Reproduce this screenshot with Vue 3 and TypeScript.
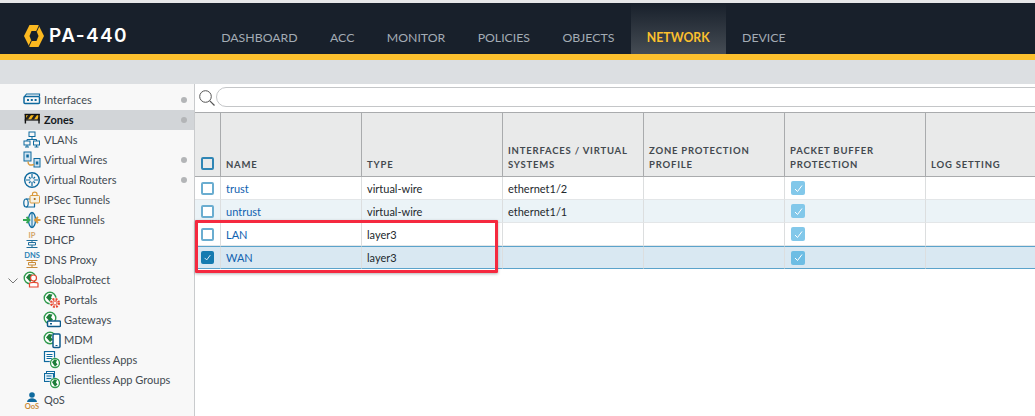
<script setup lang="ts">
const tabs = ['DASHBOARD', 'ACC', 'MONITOR', 'POLICIES', 'OBJECTS', 'NETWORK', 'DEVICE'];

interface NavItem {
  label: string;
  icon: string;
  dot?: boolean;
  child?: boolean;
  active?: boolean;
  caret?: boolean;
}

const nav: NavItem[] = [
  { label: 'Interfaces', icon: 'iface', dot: true },
  { label: 'Zones', icon: 'zones', dot: true, active: true },
  { label: 'VLANs', icon: 'vlans' },
  { label: 'Virtual Wires', icon: 'wires', dot: true },
  { label: 'Virtual Routers', icon: 'routers', dot: true },
  { label: 'IPSec Tunnels', icon: 'ipsec' },
  { label: 'GRE Tunnels', icon: 'gre' },
  { label: 'DHCP', icon: 'dhcp' },
  { label: 'DNS Proxy', icon: 'dns' },
  { label: 'GlobalProtect', icon: 'gp', caret: true },
  { label: 'Portals', icon: 'portals', child: true },
  { label: 'Gateways', icon: 'gateways', child: true },
  { label: 'MDM', icon: 'mdm', child: true },
  { label: 'Clientless Apps', icon: 'apps', child: true },
  { label: 'Clientless App Groups', icon: 'groups', child: true },
  { label: 'QoS', icon: 'qos' },
];

const zones = [
  { name: 'trust', type: 'virtual-wire', iface: 'ethernet1/2', checked: false },
  { name: 'untrust', type: 'virtual-wire', iface: 'ethernet1/1', checked: false },
  { name: 'LAN', type: 'layer3', iface: '', checked: false },
  { name: 'WAN', type: 'layer3', iface: '', checked: true },
];
</script>

<template>
  <div class="page">
    <header class="top">
      <div class="brand">
        <svg class="logo" width="20" height="22" viewBox="0 0 20 22">
          <path d="M5.500 0H14.500L20 11L14.500 22H5.500L0 11Z" fill="#fcb920" />
          <path d="M7.500 6H12.500L14.500 11L12.500 16H7.500L5.500 11Z" fill="#18202b" />
          <path d="M12 6.500 15 0H16L13 6.500ZM8 15.500 5 22H4L7 15.500Z" fill="#18202b" />
        </svg>
        <span class="model">PA-440</span>
      </div>
      <nav class="tabs">
        <a v-for="t in tabs" :key="t" class="tab" :class="{ on: t === 'NETWORK' }">{{ t }}</a>
      </nav>
    </header>
    <div class="subbar"></div>

    <div class="body">
      <aside class="side">
        <div v-for="n in nav" :key="n.label" class="item" :class="{ active: n.active, child: n.child }">
          <svg v-if="n.caret" class="caret" width="10" height="6" viewBox="0 0 10 6">
            <path d="M.5.5 5 5 9.500.5" fill="none" stroke="#777" stroke-width="1" />
          </svg>
          <svg class="ico" width="18" height="18" viewBox="0 0 18 18" fill="none">
            <template v-if="n.icon === 'iface'">
              <path d="M1.500 5.500 3.500 3H16.500V5" stroke="#0f6a9e" stroke-width="1.200" />
              <rect x="1" y="5.500" width="15.500" height="7" rx="1" stroke="#0f6a9e" stroke-width="1.500" />
              <path d="M4 9H6M7.800 9H9.800M11.600 9H13.600" stroke="#0f6a9e" stroke-width="2" />
            </template>
            <template v-else-if="n.icon === 'zones'">
              <rect x="2" y="4" width="14.500" height="4.500" fill="#f2b51c" />
              <path d="M2 8.500 5 4H8L5 8.500ZM8 8.500 11 4H14L11 8.500ZM14 8.500 16.500 5V8.500Z" fill="#222" />
              <path d="M1.700 3.500H16.800" stroke="#111" stroke-width="1.400" />
              <path d="M1.700 9H16.800" stroke="#111" stroke-width="1.200" />
              <path d="M2.400 3V12.500M16 3V12.500" stroke="#111" stroke-width="1.400" />
            </template>
            <template v-else-if="n.icon === 'vlans'">
              <rect x="6" y="1" width="6" height="4.500" stroke="#0f6a9e" />
              <rect x="1" y="10" width="6" height="4" stroke="#0f6a9e" />
              <rect x="10.500" y="10" width="6" height="4" stroke="#0f6a9e" />
              <path d="M9 6V8.500M4 10V8.500H13.500V10M4 14V16M13.500 14V16M2 16H6M11.500 16H15.500" stroke="#0f6a9e" />
            </template>
            <template v-else-if="n.icon === 'wires'">
              <rect x="1" y="1" width="7" height="9" fill="#cfe3f1" stroke="#0f6a9e" />
              <rect x="11" y="7.500" width="6" height="8.500" fill="#cfe3f1" stroke="#0f6a9e" />
              <rect x="3.300" y="3.500" width="2.500" height="3" fill="#0f6a9e" />
              <rect x="12.800" y="10.500" width="2.500" height="3" fill="#0f6a9e" />
              <path d="M5 10.500C5 14.500 7 14.500 11 13.500" stroke="#d99a3c" stroke-width="1.400" />
            </template>
            <template v-else-if="n.icon === 'routers'">
              <circle cx="9" cy="9" r="7.300" stroke="#0f6a9e" stroke-width="1.400" />
              <path d="M9 3V15M3 9H15M6 6 12 12M12 6 6 12" stroke="#0f6a9e" stroke-width="1.200" />
              <circle cx="9" cy="9" r="2" fill="#f8f8f8" />
            </template>
            <template v-else-if="n.icon === 'ipsec'">
              <path d="M3 8H9M3 16H12" stroke="#0f6a9e" stroke-width="1.200" />
              <ellipse cx="3" cy="12" rx="2.200" ry="4" stroke="#0f6a9e" stroke-width="1.200" />
              <path d="M11.500 12V16" stroke="#0f6a9e" stroke-width="1.200" />
              <rect x="7" y="4.500" width="9.500" height="7.500" rx="1" fill="#f7f2e4" stroke="#d99a3c" />
              <path d="M9.500 4.500V3C9.500 .4 14 .4 14 3V4.500" stroke="#d99a3c" stroke-width="1.200" />
              <circle cx="11.700" cy="8" r="1.100" fill="#a96d18" />
            </template>
            <template v-else-if="n.icon === 'gre'">
              <ellipse cx="9" cy="9" rx="3.500" ry="7.500" fill="#dcecf6" stroke="#0f6a9e" stroke-width="1.300" />
              <path d="M9 2V16" stroke="#0f6a9e" />
              <path d="M0 9H6M3.500 6 6.500 9 3.500 12" stroke="#35a853" stroke-width="1.800" />
              <path d="M17.500 9H12.500M15 6 12 9 15 12" stroke="#d99a3c" stroke-width="1.800" />
            </template>
            <template v-else-if="n.icon === 'dhcp' || n.icon === 'dns'">
              <path
                d="M3.500 9.500H14.500M9 9.500V11.500M5.500 11.500H12.500V14H5.500ZM9 14V16.500M3.500 16.500H14.500"
                :stroke="n.icon === 'dns' ? '#c98b38' : '#1e6e9e'"
                stroke-width="1"
              />
              <text x="9" y="7" text-anchor="middle" class="mini" :fill="n.icon === 'dns' ? '#2a7fb5' : '#d3a566'">
                {{ n.icon === 'dns' ? 'DNS' : 'IP' }}
              </text>
            </template>
            <template v-else-if="n.icon === 'qos'">
              <circle cx="9" cy="4" r="2.800" fill="#0f6a9e" />
              <path d="M4 11C4.500 6 13.500 6 14 11Z" fill="#0f6a9e" />
              <text x="9" y="17.500" text-anchor="middle" class="mini" fill="#c98b38">QoS</text>
            </template>
            <template v-else-if="n.icon === 'apps' || n.icon === 'groups'">
              <template v-if="n.icon === 'apps'">
                <rect x="1.500" y="0.500" width="10" height="10" fill="#fff" stroke="#0f6a9e" stroke-width="1.200" />
                <path d="M3.500 3.500H9.500M3.500 5.500H9.500M3.500 7.500H9.500" stroke="#0f6a9e" />
              </template>
              <template v-else>
                <rect x="3.500" y="0.500" width="8" height="7" fill="#fff" stroke="#0f6a9e" />
                <rect x="1.500" y="2.500" width="9" height="8" fill="#dcecf6" stroke="#0f6a9e" />
                <path d="M3.500 5H8.500M3.500 7.500H8.500" stroke="#0f6a9e" />
              </template>
              <circle cx="12" cy="12" r="5.500" fill="#fff" />
              <circle cx="12" cy="12" r="4.500" fill="#fff" stroke="#2f9a4c" stroke-width="1.300" />
              <path d="M9 11 11.500 8.500 14 9 13 11.500 14.500 13.500 12 15.500 10.500 13.500Z" fill="#1e7d39" />
            </template>
            <template v-else>
              <circle cx="7" cy="7" r="5.800" fill="#fff" stroke="#2f9a4c" stroke-width="1.400" />
              <path d="M3 6.500 6 3 9.500 3.500 8 6.500 10 8.500 7 11 5 8.500Z" fill="#1e7d39" />
              <template v-if="n.icon === 'gp'">
                <circle cx="10.500" cy="7" r="3" fill="#fff" stroke="#e8452e" stroke-width="1.200" />
                <path d="M6.500 16V12.500C6.500 11 15 11 15 12.500V16Z" fill="#fff" stroke="#e8452e" stroke-width="1.200" />
              </template>
              <template v-else-if="n.icon === 'portals'">
                <circle cx="12" cy="12" r="5.500" fill="#f8f8f8" />
                <circle cx="12" cy="12" r="3.800" fill="none" stroke="#e8452e" stroke-width="2.400" stroke-dasharray="1.800 1.200" />
                <circle cx="12" cy="12" r="1.900" fill="#f8f8f8" stroke="#e8452e" stroke-width=".8" />
              </template>
              <template v-else-if="n.icon === 'gateways'">
                <rect x="4.500" y="10" width="13" height="5.500" rx="1" fill="#fff" stroke="#0f5a8a" stroke-width="1.500" />
                <path d="M7 12.800H9" stroke="#0f5a8a" stroke-width="1.500" />
              </template>
              <template v-else>
                <rect x="10" y="3" width="7" height="13.500" rx="1" fill="#fff" stroke="#0f5a8a" stroke-width="1.500" />
                <path d="M12.500 14.500H14.500" stroke="#0f5a8a" />
              </template>
            </template>
          </svg>
          <span class="label">{{ n.label }}</span>
          <i v-if="n.dot" class="dot"></i>
        </div>
        <div class="item clipped">
          <span class="folder"></span>
        </div>
      </aside>

      <main class="main">
        <div class="search">
          <svg class="lens" width="18" height="18" viewBox="0 0 18 18" fill="none">
            <circle cx="7.500" cy="7.500" r="5.800" stroke="#555" stroke-width="1" />
            <path d="M11.800 11.800 16.500 16.500" stroke="#555" stroke-width="1.200" />
          </svg>
          <div class="field"></div>
        </div>
        <table class="grid">
          <colgroup>
            <col class="c0" /><col class="c1" /><col class="c1" /><col class="c1" />
            <col class="c1" /><col class="c1" /><col class="c4" />
          </colgroup>
          <thead>
            <tr>
              <th class="head-chk"><span class="box head"></span></th>
              <th>NAME</th>
              <th>TYPE</th>
              <th>INTERFACES / VIRTUAL SYSTEMS</th>
              <th>ZONE PROTECTION PROFILE</th>
              <th>PACKET BUFFER PROTECTION</th>
              <th>LOG SETTING</th>
            </tr>
          </thead>
          <tbody>
            <tr v-for="(z, i) in zones" :key="z.name" :class="{ alt: i === 1, picked: z.checked }">
              <td class="chk">
                <span class="box" :class="{ checked: z.checked }">
                  <svg v-if="z.checked" width="11" height="11" viewBox="0 0 11 11" fill="none">
                    <path d="M2 6 4.500 8.500 9 2.500" stroke="#fff" stroke-width="1" />
                  </svg>
                </span>
              </td>
              <td><a class="link">{{ z.name }}</a></td>
              <td>{{ z.type }}</td>
              <td>{{ z.iface }}</td>
              <td></td>
              <td class="chk">
                <span class="tick">
                  <svg width="11" height="11" viewBox="0 0 11 11" fill="none">
                    <path d="M2 6 4.500 8.500 9 2.500" stroke="#fff" stroke-width="1" />
                  </svg>
                </span>
              </td>
              <td></td>
            </tr>
          </tbody>
        </table>
        <div class="callout"></div>
      </main>
    </div>
  </div>
</template>

<style>
html, body {
  margin: 0;
  background: #fff;
  overflow: hidden;
}
</style>

<style scoped>
.page {
  width: 1035px;
  height: 416px;
  overflow: hidden;
  display: flex;
  flex-direction: column;
  font-family: Lato, "Open Sans", sans-serif;
  border-top: 3px solid #e6e7e8;
  box-sizing: border-box;
}

.top {
  height: 51px;
  flex: none;
  display: flex;
  background: #18202b;
  border-bottom: 6px solid #fcc02e;
}

.brand {
  width: 205px;
  flex: none;
  display: flex;
  align-items: center;
  padding: 14px 0 0 24px;
  box-sizing: border-box;
  gap: 5px;
}

.logo {
  flex: none;
}

.model {
  color: #fff;
  font-size: 19px;
  font-weight: 600;
  letter-spacing: 1.4px;
  font-family: Inter, sans-serif;
}

.tabs {
  display: flex;
}

.tab {
  display: flex;
  align-items: center;
  padding: 17px 16.200px 0;
  box-sizing: border-box;
  color: #a4acb5;
  font-size: 12.300px;
}

.tab.on {
  color: #fcc02e;
  font-weight: 700;
  background: linear-gradient(#18202b, #454c54);
}

.subbar {
  height: 24px;
  flex: none;
  background: #dcdfe2;
}

.body {
  flex: 1;
  display: flex;
  min-height: 0;
}

.side {
  width: 195px;
  flex: none;
  box-sizing: border-box;
  padding-top: 6px;
  background: #f8f8f8;
  border-right: 1px solid #c9cbcd;
}

.item {
  position: relative;
  height: 20px;
  display: flex;
  align-items: center;
  padding-left: 23px;
  font-size: 11px;
  line-height: 20px;
  color: #424a52;
}

.item.child {
  padding-left: 43px;
}

.item.active {
  background: #d2d5d8;
  color: #15191d;
  font-weight: 700;
}

.ico {
  flex: none;
  margin-right: 3px;
}

.mini {
  font-size: 7.500px;
  font-family: Lato, sans-serif;
  font-weight: 700;
}

.label {
  flex: 1;
}

.caret {
  position: absolute;
  left: 8px;
  top: 8px;
}

.dot {
  width: 6px;
  height: 6px;
  margin-right: 7px;
  border-radius: 50%;
  background: #b3b5b7;
}

.folder {
  width: 15px;
  height: 8px;
  margin: 12px 0 0 1px;
  background: #b08a3a;
  border-radius: 2px 2px 0 0;
}

.main {
  position: relative;
  flex: 1;
  min-width: 0;
}

.search {
  display: flex;
  align-items: flex-start;
  height: 28px;
  padding: 3px 0 0 3px;
  box-sizing: border-box;
}

.lens {
  flex: none;
  margin-top: 2px;
}

.field {
  width: 880px;
  flex: none;
  height: 20px;
  box-sizing: border-box;
  border: 1px solid #c4c6c8;
  border-radius: 10px;
  background: #fff;
}

.grid {
  width: 841px;
  table-layout: fixed;
  border-collapse: separate;
  border-spacing: 0;
  font-size: 11px;
  color: #23282d;
}

.c0 { width: 26px; }
.c1 { width: 141px; }
.c4 { width: 110px; }

th {
  height: 65px;
  box-sizing: border-box;
  padding: 0 5px 4px;
  background: #e9eaea;
  border-top: 1px solid #a9abad;
  border-bottom: 1px solid #a9abad;
  border-right: 1px solid #a9abad;
  vertical-align: bottom;
  text-align: left;
  font-size: 9.500px;
  font-weight: 700;
  line-height: 14px;
  letter-spacing: 0.8px;
  color: #43494f;
}

th.head-chk {
  padding: 0 0 6px 6px;
  line-height: 0;
}

th:last-child,
td:last-child {
  border-right: 0;
}

td {
  height: 23px;
  box-sizing: border-box;
  padding: 0 5px;
  border-right: 1px solid #dcdedf;
  border-bottom: 1px solid #e3e6e8;
  background: #fff;
}

.alt td {
  background: #ebf3f7;
}

.picked td {
  background: #d9e8f2;
  border-top: 1px solid #5ba3cb;
  border-bottom: 1px solid #5ba3cb;
}

.link {
  color: #1062b0;
}

.chk {
  padding: 0 0 0 6px;
  line-height: 0;
}

.box {
  display: inline-flex;
  align-items: center;
  justify-content: center;
  width: 13px;
  height: 13px;
  box-sizing: border-box;
  border: 2px solid #6aadd0;
  border-radius: 2px;
  background: #fff;
}

.box.head {
  border-color: #2f86b5;
  background: #e9eaea;
}

.box.checked {
  border-color: #157bb0;
  background: #157bb0;
}

.tick {
  display: inline-flex;
  align-items: center;
  justify-content: center;
  width: 14px;
  height: 14px;
  border-radius: 2px;
  background: #82c8ea;
}

.picked .tick {
  background: #6dbde4;
}

.callout {
  position: absolute;
  left: 0;
  top: 136px;
  width: 303px;
  height: 53px;
  box-sizing: border-box;
  border: 3px solid #f5293f;
  border-radius: 1px;
  box-shadow: 0 1px 3px rgba(0, 0, 0, 0.3);
}
</style>
